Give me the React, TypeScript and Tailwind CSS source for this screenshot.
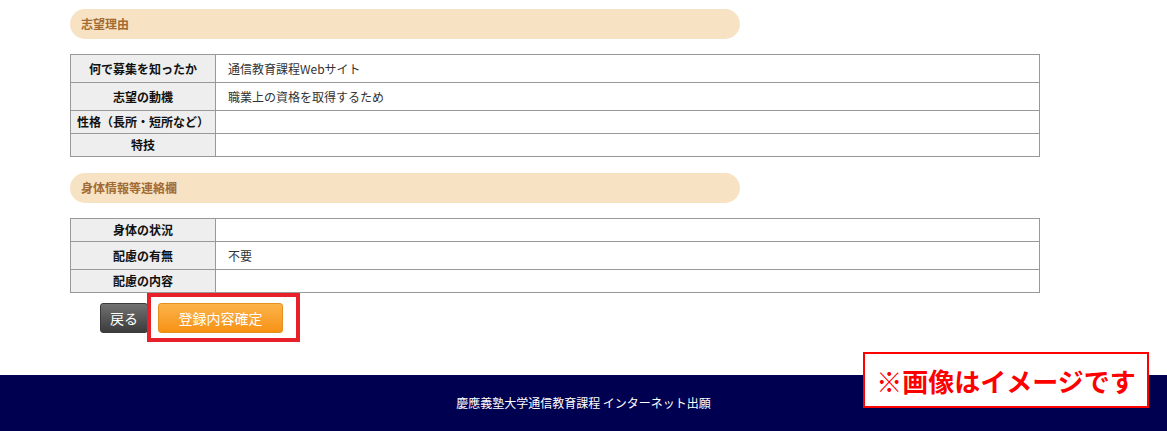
const jp = "font-['Meiryo','Noto_Sans_CJK_JP',sans-serif]";

type Row = { label: string; value?: string };

const reasonRows: Row[] = [
  { label: "何で募集を知ったか", value: "通信教育課程Webサイト" },
  { label: "志望の動機", value: "職業上の資格を取得するため" },
  { label: "性格（長所・短所など）" },
  { label: "特技" },
];

const bodyRows: Row[] = [
  { label: "身体の状況" },
  { label: "配慮の有無", value: "不要" },
  { label: "配慮の内容" },
];

function SectionTitle({ children }: { children: string }) {
  return (
    <div className="flex h-[30px] w-[670px] items-center rounded-full bg-[#f8e2c4] pl-[11px] text-[12px] font-bold text-[#a26b33]">
      {children}
    </div>
  );
}

function InfoTable({ rows }: { rows: Row[] }) {
  return (
    <table className="w-[970px] border-collapse text-[12px]">
      <tbody>
        {rows.map((r) => (
          <tr key={r.label} className={r.value ? "h-[28px]" : "h-[23px]"}>
            <th className="w-[145px] border border-[#999] bg-[#eeeeee] p-0 text-center font-bold text-[#111]">
              {r.label}
            </th>
            <td className="border border-[#999] py-0 pl-[12px] text-[#333]">{r.value}</td>
          </tr>
        ))}
      </tbody>
    </table>
  );
}

export default function App() {
  return (
    <div className={`${jp} relative min-h-[431px] bg-white`}>
      <div className="pl-[70px] pt-[9px]">
        <SectionTitle>志望理由</SectionTitle>
        <div className="mt-[15px]">
          <InfoTable rows={reasonRows} />
        </div>
        <div className="mt-[16px]">
          <SectionTitle>身体情報等連絡欄</SectionTitle>
        </div>
        <div className="mt-[15px]">
          <InfoTable rows={bodyRows} />
        </div>
        <div className="mt-[10px] flex gap-[10px] pl-[30px]">
          <button className="h-[30px] w-[48px] rounded-[3px] border border-[#3a3a3a] bg-gradient-to-b from-[#727272] to-[#3c3c3c] text-[14px] text-white">
            戻る
          </button>
          <div className="relative">
            <button className="h-[30px] w-[125px] rounded-[3px] border border-[#e3901f] bg-gradient-to-b from-[#fbb347] to-[#f7920f] text-[14px] text-white">
              登録内容確定
            </button>
            <div className="pointer-events-none absolute -bottom-[9px] -left-[11px] -right-[17px] -top-[10px] border-[4px] border-[#e8202a]" />
          </div>
        </div>
      </div>
      <footer className="mt-[42px] flex h-[56px] items-center justify-center bg-[#000050] text-[12px] text-white">
        慶應義塾大学通信教育課程 インターネット出願
      </footer>
      <div className="absolute left-[863px] top-[352px] flex h-[56px] w-[286px] items-center justify-center border-2 border-[#ff0000] bg-white text-[26px] font-bold text-[#ff0000]">
        ※画像はイメージです
      </div>
    </div>
  );
}
